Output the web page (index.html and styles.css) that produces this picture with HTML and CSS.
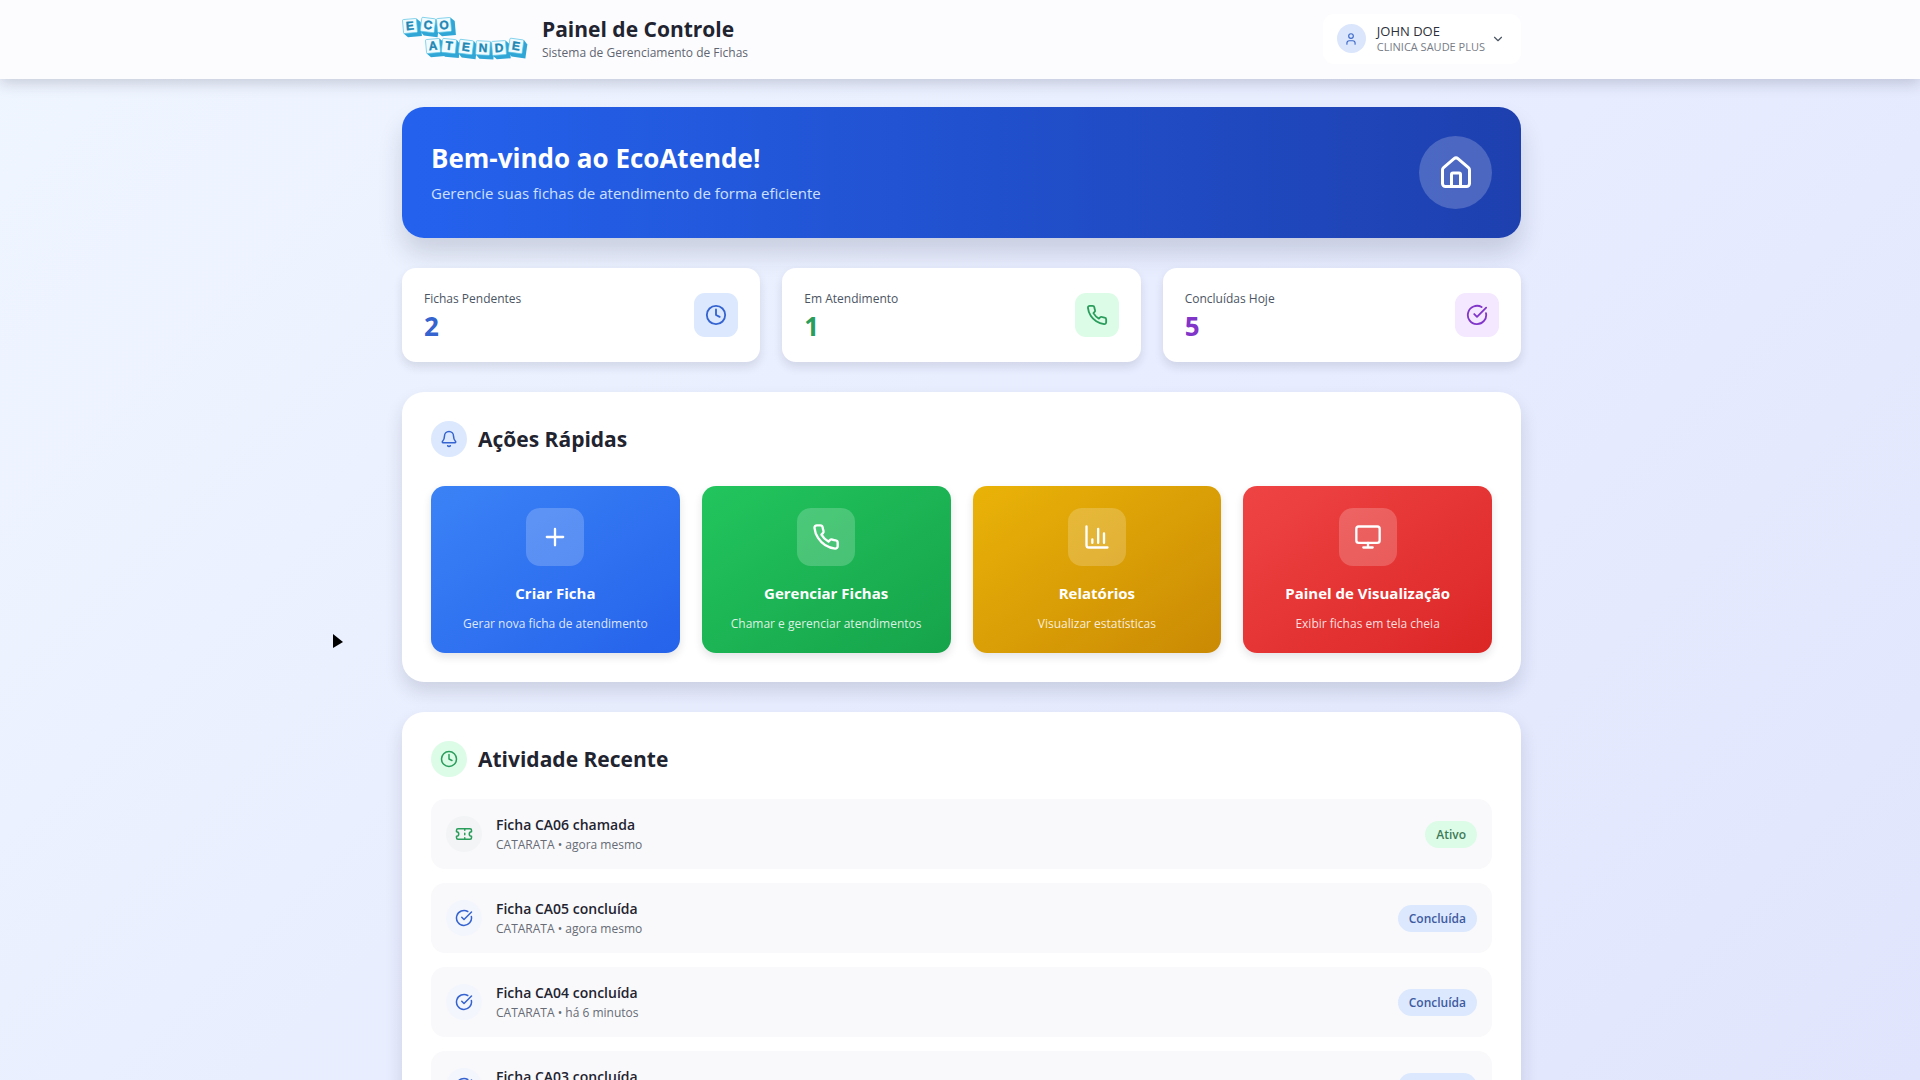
FILE: index.html
```html
<!DOCTYPE html>
<html lang="pt-BR">
<head>
<meta charset="utf-8">
<meta name="viewport" content="width=device-width, initial-scale=1">
<title>EcoAtende - Painel de Controle</title>
<link rel="stylesheet" href="styles.css">
</head>
<body>
<svg class="sprite" aria-hidden="true">
  <symbol id="clock" viewBox="0 0 24 24"><circle cx="12" cy="12" r="10"/><path d="M12 6v6l4 2"/></symbol>
  <symbol id="phone" viewBox="0 0 24 24"><path d="M22 16.92v3a2 2 0 0 1-2.18 2 19.79 19.79 0 0 1-8.63-3.07 19.5 19.5 0 0 1-6-6 19.79 19.79 0 0 1-3.07-8.67A2 2 0 0 1 4.11 2h3a2 2 0 0 1 2 1.72 12.84 12.84 0 0 0 .7 2.81 2 2 0 0 1-.45 2.11L8.09 9.91a16 16 0 0 0 6 6l1.27-1.27a2 2 0 0 1 2.11-.45 12.84 12.84 0 0 0 2.81.7A2 2 0 0 1 22 16.92z"/></symbol>
  <symbol id="check" viewBox="0 0 24 24"><path d="M21.801 10A10 10 0 1 1 17 3.335"/><path d="m9 11 3 3L22 4"/></symbol>
  <symbol id="home" viewBox="0 0 24 24"><path d="M15 21v-8a1 1 0 0 0-1-1h-4a1 1 0 0 0-1 1v8"/><path d="M3 10a2 2 0 0 1 .709-1.528l7-5.999a2 2 0 0 1 2.582 0l7 5.999A2 2 0 0 1 21 10v9a2 2 0 0 1-2 2H5a2 2 0 0 1-2-2z"/></symbol>
  <symbol id="bell" viewBox="0 0 24 24"><path d="M10.268 21a2 2 0 0 0 3.464 0"/><path d="M3.262 15.326A1 1 0 0 0 4 17h16a1 1 0 0 0 .74-1.673C19.41 13.956 18 12.499 18 8A6 6 0 0 0 6 8c0 4.499-1.411 5.956-2.738 7.326"/></symbol>
  <symbol id="plus" viewBox="0 0 24 24"><path d="M5 12h14M12 5v14"/></symbol>
  <symbol id="chart" viewBox="0 0 24 24"><path d="M3 3v16a2 2 0 0 0 2 2h16"/><path d="M18 17V9M13 17V5M8 17v-3"/></symbol>
  <symbol id="monitor" viewBox="0 0 24 24"><rect x="2" y="3" width="20" height="14" rx="2"/><path d="M8 21h8M12 17v4"/></symbol>
  <symbol id="ticket" viewBox="0 0 24 24"><path d="M2 9a3 3 0 0 1 0 6v2a2 2 0 0 0 2 2h16a2 2 0 0 0 2-2v-2a3 3 0 0 1 0-6V7a2 2 0 0 0-2-2H4a2 2 0 0 0-2 2Z"/><path d="M13 5v2M13 17v2M13 11v2"/></symbol>
  <symbol id="user" viewBox="0 0 24 24"><path d="M19 21v-2a4 4 0 0 0-4-4H9a4 4 0 0 0-4 4v2"/><circle cx="12" cy="7" r="4"/></symbol>
  <symbol id="chevron" viewBox="0 0 24 24"><path d="m6 9 6 6 6-6"/></symbol>
</svg>

<header class="topbar">
  <div class="wrap topbar-row">
    <svg class="logo" viewBox="0 0 126 48" role="img" aria-label="Eco Atende">
      <defs>
        <g id="tile">
          <path class="tile-side" d="M-7 7 L-3 11 H11 V-3 L7 -7 Z"/>
          <rect class="tile-face" x="-7" y="-7" width="14" height="14" rx="1"/>
        </g>
      </defs>
      <g transform="translate(8 11) rotate(-5)"><use href="#tile"/><text y="4">E</text></g>
      <g transform="translate(26 10) rotate(7)"><use href="#tile"/><text y="4">C</text></g>
      <g transform="translate(42 10) rotate(-5)"><use href="#tile"/><text y="4">O</text></g>
      <g transform="translate(31 31) rotate(-5)"><use href="#tile"/><text y="4">A</text></g>
      <g transform="translate(47 31) rotate(6)"><use href="#tile"/><text y="4">T</text></g>
      <g transform="translate(64 32) rotate(7)"><use href="#tile"/><text y="4">E</text></g>
      <g transform="translate(81 33) rotate(3)"><use href="#tile"/><text y="4">N</text></g>
      <g transform="translate(97 33) rotate(-4)"><use href="#tile"/><text y="4">D</text></g>
      <g transform="translate(114 31) rotate(8)"><use href="#tile"/><text y="4">E</text></g>
    </svg>
    <div class="brand">
      <h1 class="brand-title">Painel de Controle</h1>
      <p class="brand-sub">Sistema de Gerenciamento de Fichas</p>
    </div>
    <button class="profile" type="button">
      <span class="avatar"><svg class="icon icon-14"><use href="#user"/></svg></span>
      <span class="profile-text">
        <span class="profile-name">JOHN DOE</span>
        <span class="profile-org">CLINICA SAUDE PLUS</span>
      </span>
      <svg class="icon icon-14"><use href="#chevron"/></svg>
    </button>
  </div>
</header>

<main class="wrap content">
  <section class="hero">
    <div>
      <h2 class="hero-title">Bem-vindo ao EcoAtende!</h2>
      <p class="hero-sub">Gerencie suas fichas de atendimento de forma eficiente</p>
    </div>
    <span class="hero-icon"><svg class="icon icon-36"><use href="#home"/></svg></span>
  </section>

  <section class="stats">
    <article class="stat blue">
      <div><p class="stat-label">Fichas Pendentes</p><p class="stat-value">2</p></div>
      <span class="stat-icon"><svg class="icon icon-22"><use href="#clock"/></svg></span>
    </article>
    <article class="stat green">
      <div><p class="stat-label">Em Atendimento</p><p class="stat-value">1</p></div>
      <span class="stat-icon"><svg class="icon icon-22"><use href="#phone"/></svg></span>
    </article>
    <article class="stat purple">
      <div><p class="stat-label">Concluídas Hoje</p><p class="stat-value">5</p></div>
      <span class="stat-icon"><svg class="icon icon-22"><use href="#check"/></svg></span>
    </article>
  </section>

  <section class="panel">
    <div class="panel-head blue">
      <span class="panel-icon"><svg class="icon icon-18"><use href="#bell"/></svg></span>
      <h2 class="panel-title">Ações Rápidas</h2>
    </div>
    <div class="actions">
      <button class="action action-blue" type="button">
        <span class="action-icon"><svg class="icon icon-28"><use href="#plus"/></svg></span>
        <span class="action-title">Criar Ficha</span>
        <span class="action-sub">Gerar nova ficha de atendimento</span>
      </button>
      <button class="action action-green" type="button">
        <span class="action-icon"><svg class="icon icon-28"><use href="#phone"/></svg></span>
        <span class="action-title">Gerenciar Fichas</span>
        <span class="action-sub">Chamar e gerenciar atendimentos</span>
      </button>
      <button class="action action-yellow" type="button">
        <span class="action-icon"><svg class="icon icon-28"><use href="#chart"/></svg></span>
        <span class="action-title">Relatórios</span>
        <span class="action-sub">Visualizar estatísticas</span>
      </button>
      <button class="action action-red" type="button">
        <span class="action-icon"><svg class="icon icon-28"><use href="#monitor"/></svg></span>
        <span class="action-title">Painel de Visualização</span>
        <span class="action-sub">Exibir fichas em tela cheia</span>
      </button>
    </div>
  </section>

  <section class="panel">
    <div class="panel-head green">
      <span class="panel-icon"><svg class="icon icon-18"><use href="#clock"/></svg></span>
      <h2 class="panel-title">Atividade Recente</h2>
    </div>
    <ul class="feed">
      <li class="entry green">
        <span class="entry-icon"><svg class="icon icon-18"><use href="#ticket"/></svg></span>
        <div class="entry-text"><p class="entry-title">Ficha CA06 chamada</p><p class="entry-sub">CATARATA • agora mesmo</p></div>
        <span class="badge">Ativo</span>
      </li>
      <li class="entry blue">
        <span class="entry-icon"><svg class="icon icon-18"><use href="#check"/></svg></span>
        <div class="entry-text"><p class="entry-title">Ficha CA05 concluída</p><p class="entry-sub">CATARATA • agora mesmo</p></div>
        <span class="badge">Concluída</span>
      </li>
      <li class="entry blue">
        <span class="entry-icon"><svg class="icon icon-18"><use href="#check"/></svg></span>
        <div class="entry-text"><p class="entry-title">Ficha CA04 concluída</p><p class="entry-sub">CATARATA • há 6 minutos</p></div>
        <span class="badge">Concluída</span>
      </li>
      <li class="entry blue">
        <span class="entry-icon"><svg class="icon icon-18"><use href="#check"/></svg></span>
        <div class="entry-text"><p class="entry-title">Ficha CA03 concluída</p><p class="entry-sub">CATARATA • há 6 minutos</p></div>
        <span class="badge">Concluída</span>
      </li>
    </ul>
  </section>
</main>

<svg class="pointer" viewBox="0 0 12 16" aria-hidden="true"><path d="M1 1v14l10-6z"/></svg>
</body>
</html>
```
FILE: styles.css
```css
* { box-sizing: border-box; margin: 0; padding: 0; }

html { scrollbar-width: none; }

body {
  position: relative;
  min-height: 100vh;
  font-family: "Open Sans", "Noto Sans", sans-serif;
  color: #1f2430;
  background: linear-gradient(135deg, #f0f6ff 0%, #e8edff 50%, #e0e5fd 100%) fixed;
}

button { font: inherit; border: 0; cursor: pointer; }
.sprite { display: none; }

.icon {
  flex: none;
  fill: none;
  stroke: currentColor;
  stroke-width: 2;
  stroke-linecap: round;
  stroke-linejoin: round;
}
.icon-14 { width: 14px; height: 14px; }
.icon-18 { width: 18px; height: 18px; }
.icon-22 { width: 22px; height: 22px; }
.icon-28 { width: 28px; height: 28px; }
.icon-36 { width: 36px; height: 36px; }

.blue { --tone: #3563d0; --tint: #dbe8fe; --ink: #3f5a9e; --soft: #f3f6fd; }
.green { --tone: #2a9d5c; --tint: #dcfce7; --ink: #3f7a58; --soft: #f3f4f5; }
.purple { --tone: #8136c9; --tint: #f3e8ff; }

.wrap {
  max-width: 1168px;
  margin: 0 auto;
  padding: 0 23px 0 26px;
}

.topbar {
  position: sticky;
  top: 0;
  z-index: 2;
  background: #fcfcff;
  box-shadow: 0 4px 14px rgba(30, 35, 60, 0.2);
}
.topbar-row {
  display: flex;
  align-items: center;
  height: 79px;
  padding-bottom: 2px;
}
.logo { width: 126px; height: 48px; }
.logo text {
  font: 700 12px "Liberation Sans", sans-serif;
  text-anchor: middle;
  fill: #1f87b3;
  stroke: #1f87b3;
  stroke-width: 0.4px;
}
.tile-side { fill: #2fa6d6; }
.tile-face { fill: #f0fbff; stroke: #5cc4e4; stroke-width: 0.7px; }

.brand { margin-left: 14px; }
.brand-title { font-size: 21px; line-height: 28px; font-weight: 700; }
.brand-sub { font-size: 12px; line-height: 20px; color: #5f6570; }

.profile {
  display: flex;
  align-items: center;
  margin-left: auto;
  padding: 9px 16px 9px 14px;
  border-radius: 11px;
  background: #fff;
  color: #4b5563;
  text-align: left;
}
.avatar {
  display: grid;
  place-items: center;
  width: 29px;
  height: 29px;
  margin-right: 11px;
  border-radius: 50%;
  background: #dbe6fd;
  color: #3f6bc9;
}
.profile-text { display: grid; margin-right: 6px; }
.profile-name { font-size: 13px; line-height: 16px; font-weight: 500; color: #2b303a; }
.profile-org { font-size: 11px; line-height: 16px; color: #777c86; }

.content {
  display: grid;
  gap: 30px;
  padding-top: 28px;
  padding-bottom: 28px;
}

.hero {
  display: flex;
  align-items: center;
  justify-content: space-between;
  padding: 29px;
  border-radius: 22px;
  background: linear-gradient(90deg, #2462ee, #1e40af);
  box-shadow: 0 16px 24px rgba(30, 35, 60, 0.16);
  color: #fff;
}
.hero-title { font-size: 26px; line-height: 36px; font-weight: 700; }
.hero-sub { font-size: 15px; line-height: 24px; margin-top: 5px; color: #cfe0fd; }
.hero-icon {
  display: grid;
  place-items: center;
  width: 73px;
  height: 73px;
  border-radius: 50%;
  background: rgba(255, 255, 255, 0.2);
}

.stats {
  display: grid;
  grid-template-columns: repeat(3, 1fr);
  gap: 22px;
}
.stat {
  display: flex;
  align-items: center;
  justify-content: space-between;
  padding: 20px 22px;
  border-radius: 14px;
  background: #fff;
  box-shadow: 0 5px 10px rgba(30, 35, 60, 0.12);
}
.stat-label { font-size: 12px; line-height: 22px; font-weight: 500; color: #4b5563; }
.stat-value { font-size: 26px; line-height: 32px; font-weight: 700; color: var(--tone); }
.stat-icon {
  display: grid;
  place-items: center;
  width: 44px;
  height: 44px;
  border-radius: 11px;
  background: var(--tint);
  color: var(--tone);
}

.panel {
  padding: 29px;
  border-radius: 22px;
  background: #fff;
  box-shadow: 0 10px 18px rgba(30, 35, 60, 0.14);
}
.panel-head {
  display: flex;
  align-items: center;
  gap: 11px;
}
.panel-icon {
  display: grid;
  place-items: center;
  width: 36px;
  height: 36px;
  border-radius: 50%;
  background: var(--tint);
  color: var(--tone);
}
.panel-title { font-size: 21px; line-height: 36px; font-weight: 700; }

.actions {
  display: grid;
  grid-template-columns: repeat(4, 1fr);
  gap: 22px;
  margin-top: 29px;
}
.action {
  display: grid;
  justify-items: center;
  padding: 22px 11px 19px;
  border-radius: 14px;
  box-shadow: 0 4px 9px rgba(30, 35, 60, 0.12);
  color: #fff;
}
.action-blue { background: linear-gradient(145deg, #3b82f6, #2563eb); }
.action-green { background: linear-gradient(145deg, #22c55e, #16a34a); }
.action-yellow { background: linear-gradient(145deg, #eab308, #ca8a04); }
.action-red { background: linear-gradient(145deg, #ef4444, #dc2626); }
.action-icon {
  display: grid;
  place-items: center;
  width: 58px;
  height: 58px;
  border-radius: 14px;
  background: rgba(255, 255, 255, 0.2);
}
.action-title { margin-top: 14px; font-size: 15px; line-height: 26px; font-weight: 700; }
.action-sub { margin-top: 8px; font-size: 12px; line-height: 20px; color: rgba(255, 255, 255, 0.85); }

.feed {
  display: grid;
  gap: 14px;
  margin-top: 22px;
  list-style: none;
}
.entry {
  display: flex;
  align-items: center;
  gap: 14px;
  padding: 15px;
  border-radius: 14px;
  background: #f9f9fb;
}
.entry-icon {
  display: grid;
  place-items: center;
  width: 36px;
  height: 36px;
  border-radius: 50%;
  background: var(--soft);
  color: var(--tone);
}
.entry-text { flex: 1; }
.entry-title { font-size: 14px; line-height: 22px; font-weight: 600; }
.entry-sub { font-size: 12px; line-height: 18px; color: #666b75; }
.badge {
  padding: 4px 11px;
  border-radius: 14px;
  background: var(--tint);
  color: var(--ink);
  font-size: 12px;
  line-height: 19px;
  font-weight: 600;
}

.pointer {
  position: absolute;
  left: 332px;
  top: 633px;
  z-index: 3;
  width: 12px;
  height: 16px;
}
```
